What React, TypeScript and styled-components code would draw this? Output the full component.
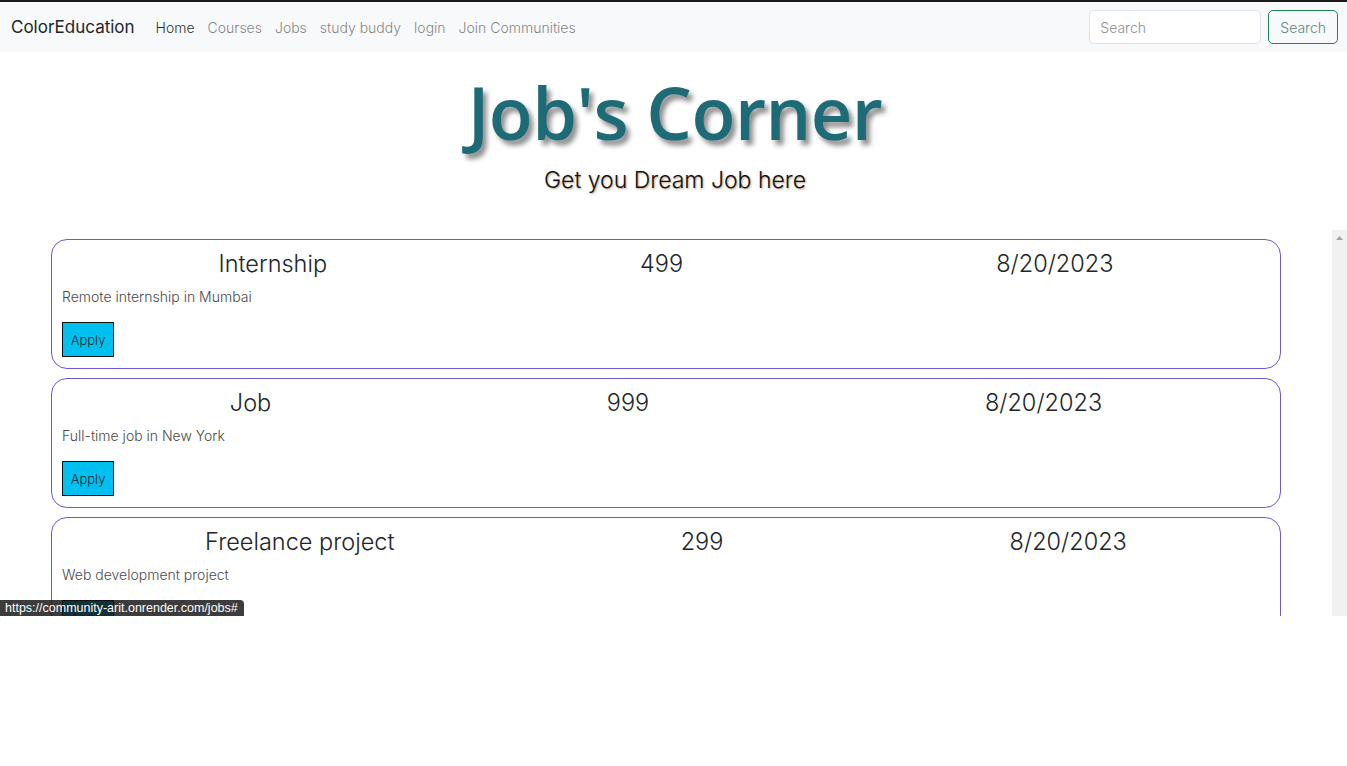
import styled, { createGlobalStyle } from 'styled-components';

const GlobalStyle = createGlobalStyle`
  html, body {
    margin: 0;
    padding: 0;
    background: #fff;
    font-family: Inter, 'Noto Sans', sans-serif;
    color: #212529;
  }
  * {
    box-sizing: border-box;
  }
`;

const Page = styled.div`
  position: relative;
  height: 616px;
  display: flex;
  flex-direction: column;
`;

const Navbar = styled.nav`
  height: 52px;
  display: flex;
  align-items: center;
  padding: 0 9px 0 11px;
  background: #f8f9fa;
  border-top: 2px solid #1a1a1a;
`;

const Brand = styled.a`
  font-size: 17px;
  color: #212529;
  margin-right: 21px;
  text-decoration: none;
`;

const NavLinks = styled.div`
  display: flex;
  gap: 13px;
  flex: 1;
`;

const NavLink = styled.a<{ $active?: boolean }>`
  font-size: 14px;
  font-weight: 300;
  color: ${(p) => (p.$active ? 'rgba(0,0,0,0.85)' : 'rgba(0,0,0,0.5)')};
  text-decoration: none;
`;

const SearchForm = styled.form`
  display: flex;
  gap: 7px;
`;

const SearchInput = styled.input`
  width: 172px;
  height: 34px;
  padding: 0 10px;
  border: 1px solid #dee2e6;
  border-radius: 5px;
  font-family: inherit;
  font-size: 14px;
  font-weight: 300;
  &::placeholder {
    color: #8a9096;
  }
`;

const SearchButton = styled.button`
  height: 34px;
  padding: 0 11px;
  background: transparent;
  border: 1px solid #198754;
  border-radius: 5px;
  font-family: inherit;
  font-size: 14px;
  font-weight: 300;
  color: #5c8a86;
`;

const Hero = styled.header`
  display: flex;
  flex-direction: column;
  align-items: center;
  padding: 16px 0 0 3px;
  height: 178px;
`;

const Title = styled.h1`
  margin: 0;
  font-family: 'Open Sans', 'DejaVu Sans', sans-serif;
  font-weight: 600;
  font-size: 72px;
  line-height: 88px;
  letter-spacing: -0.5px;
  color: #1d6b77;
  text-shadow: 4px 5px 5px rgba(0, 0, 0, 0.45);
`;

const Subtitle = styled.p`
  margin: 10px 0 0;
  font-size: 23px;
  font-weight: 300;
  color: #111;
  text-shadow: 1px 1px 2px rgba(120, 60, 0, 0.5);
`;

const ListArea = styled.div`
  height: 386px;
  display: flex;
`;

const JobList = styled.section`
  flex: 1;
  overflow: hidden;
  padding-top: 9px;
`;

const ScrollTrack = styled.div`
  width: 15px;
  background: #f1f1f1;
  display: flex;
  justify-content: center;
  padding-top: 6px;
`;

const Card = styled.article`
  margin: 0 51px 9px;
  padding: 7px 10px 11px;
  border: 1px solid #6a5acd;
  border-radius: 16px;
`;

const CardHead = styled.div`
  display: flex;
  justify-content: space-around;
  font-size: 23.5px;
  font-weight: 300;
  line-height: 34px;
  color: #212529;
`;

const Description = styled.p`
  margin: 7px 0 17px;
  font-size: 14px;
  font-weight: 300;
  color: #4a4a4a;
`;

const ApplyButton = styled.button`
  width: 52px;
  height: 35px;
  padding: 0;
  background: #00c0f0;
  border: 1px solid #111;
  font-family: inherit;
  font-size: 13px;
  font-weight: 300;
  color: #1b2a30;
`;

const StatusBubble = styled.div`
  position: absolute;
  left: 0;
  bottom: 0;
  padding: 1px 6px 0 5px;
  height: 16px;
  background: rgba(20, 20, 20, 0.83);
  border-top-right-radius: 4px;
  color: #fff;
  font-family: 'Liberation Sans', Arial, sans-serif;
  font-size: 12.5px;
  line-height: 15px;
`;

const jobs = [
  { title: 'Internship', price: 499, date: '8/20/2023', desc: 'Remote internship in Mumbai' },
  { title: 'Job', price: 999, date: '8/20/2023', desc: 'Full-time job in New York' },
  { title: 'Freelance project', price: 299, date: '8/20/2023', desc: 'Web development project' },
];

const App = () => {
  return (
    <Page>
      <GlobalStyle />
      <Navbar>
        <Brand href='#'>ColorEducation</Brand>
        <NavLinks>
          <NavLink $active href='#'>Home</NavLink>
          <NavLink href='#'>Courses</NavLink>
          <NavLink href='#'>Jobs</NavLink>
          <NavLink href='#'>study buddy</NavLink>
          <NavLink href='#'>login</NavLink>
          <NavLink href='#'>Join Communities</NavLink>
        </NavLinks>
        <SearchForm onSubmit={(e) => e.preventDefault()}>
          <SearchInput placeholder='Search' />
          <SearchButton type='submit'>Search</SearchButton>
        </SearchForm>
      </Navbar>
      <Hero>
        <Title>Job's Corner</Title>
        <Subtitle>Get you Dream Job here</Subtitle>
      </Hero>
      <ListArea>
        <JobList>
          {jobs.map((job) => (
            <Card key={job.title}>
              <CardHead>
                <span>{job.title}</span>
                <span>{job.price}</span>
                <span>{job.date}</span>
              </CardHead>
              <Description>{job.desc}</Description>
              <ApplyButton>Apply</ApplyButton>
            </Card>
          ))}
        </JobList>
        <ScrollTrack>
          <svg width='7' height='4' viewBox='0 0 7 4'>
            <path d='M3.5 0L7 4H0z' fill='#a3a3a3' />
          </svg>
        </ScrollTrack>
      </ListArea>
      <StatusBubble>https://community-arit.onrender.com/jobs#</StatusBubble>
    </Page>
  );
};

export default App;
